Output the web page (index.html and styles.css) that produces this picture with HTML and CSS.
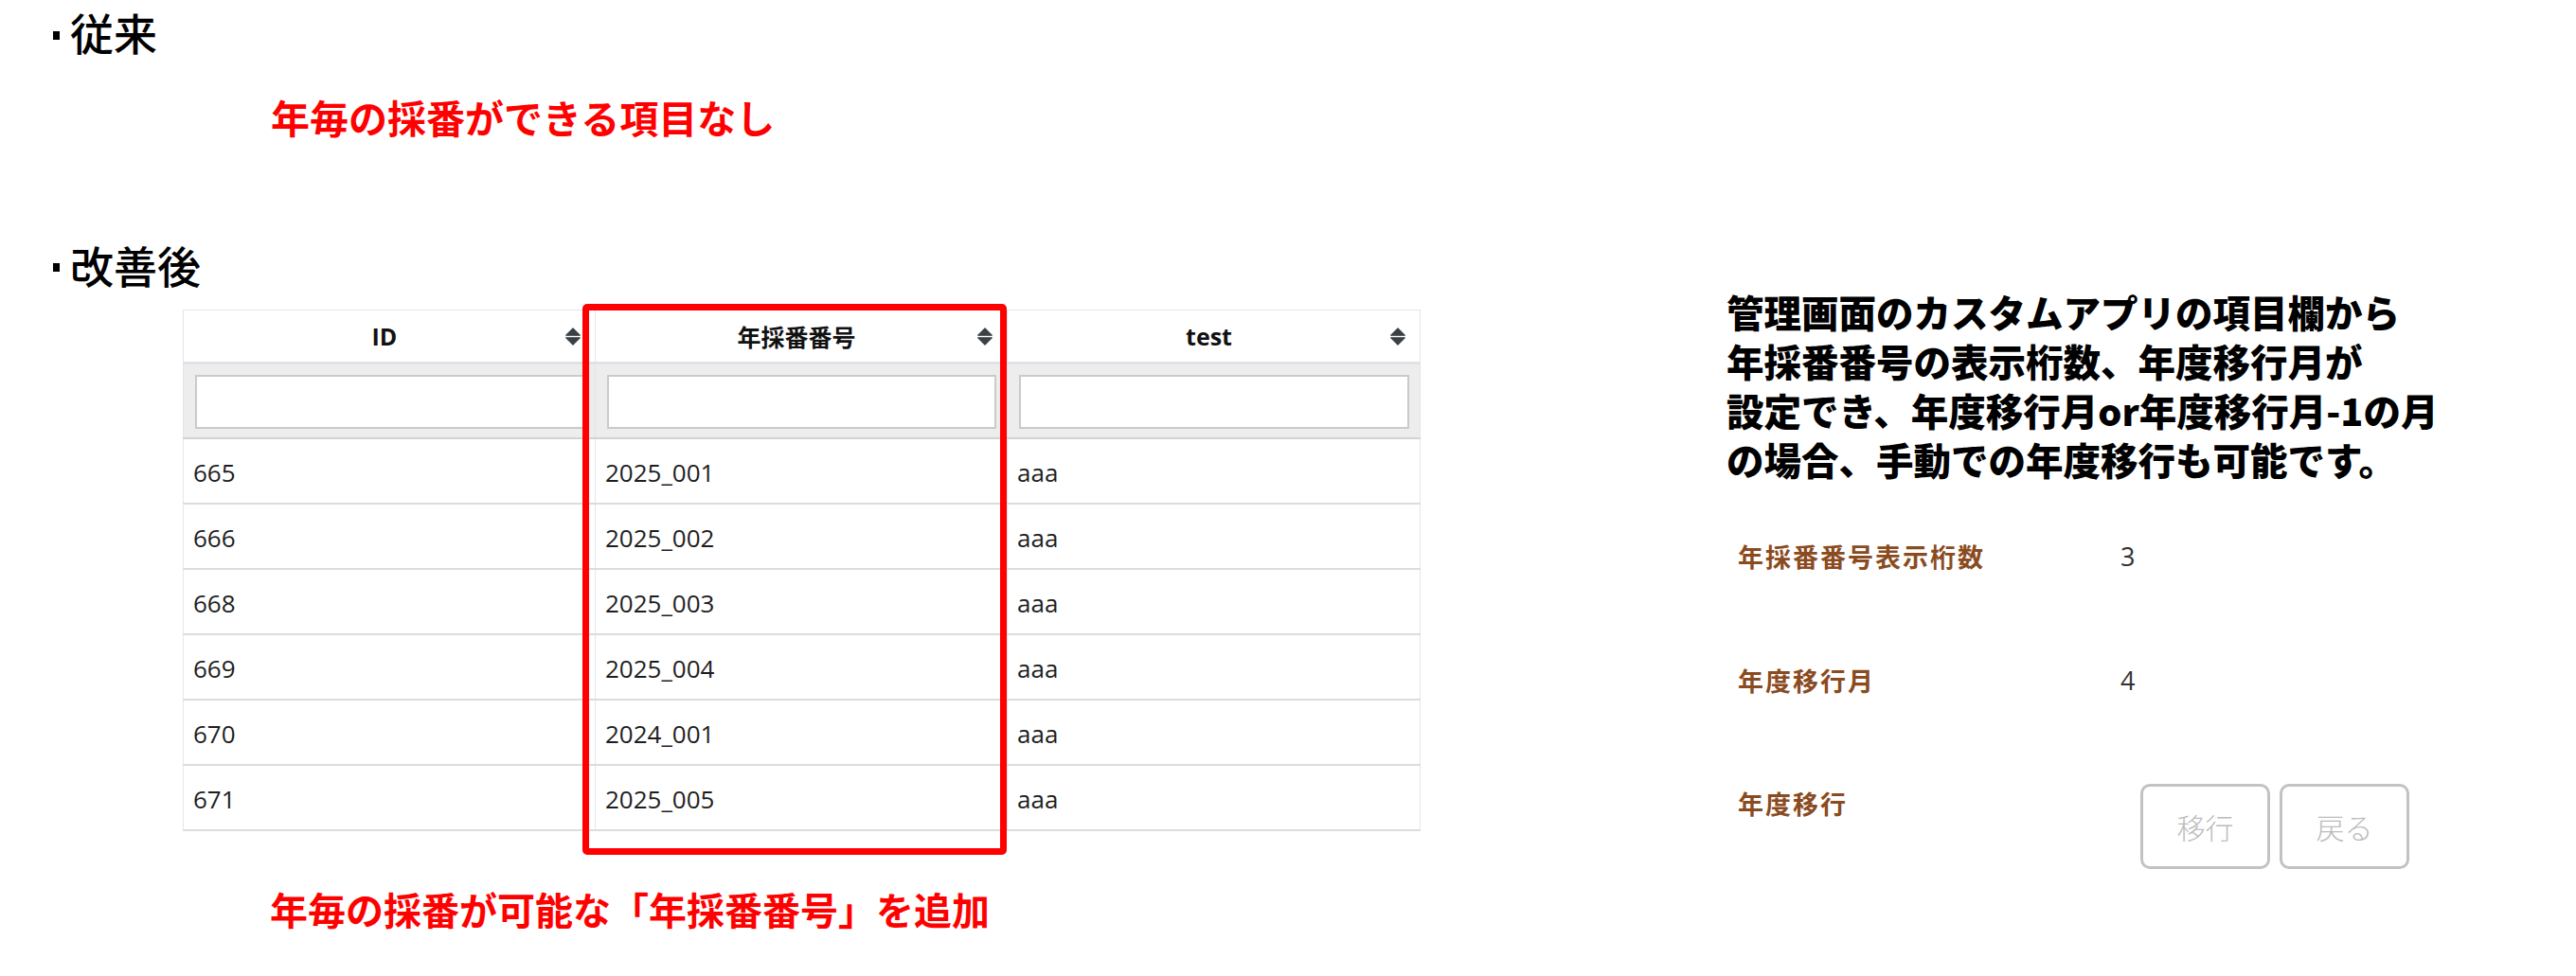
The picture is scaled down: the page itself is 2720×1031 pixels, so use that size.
FILE: index.html
```html
<!DOCTYPE html>
<html lang="ja">
<head>
<meta charset="utf-8">
<title>年採番番号</title>
<link rel="stylesheet" href="styles.css">
</head>
<body>
<main class="page">
  <div class="left">
    <section class="block block-before">
      <h2 class="sec-title"><span class="bullet"></span><span>従来</span></h2>
      <p class="note note-before">年毎の採番ができる項目なし</p>
    </section>
    <section class="block">
      <h2 class="sec-title sec-after"><span class="bullet"></span><span>改善後</span></h2>
      <div class="table-wrap">
        <table class="grid">
          <colgroup><col class="c1"><col class="c2"><col class="c3"></colgroup>
          <thead>
            <tr class="head-row">
              <th><div class="th-in"><span class="th-label">ID</span><svg class="sort" viewBox="0 0 16 19" width="16" height="19"><path d="M8 0.8 L15.3 8.2 H0.7 Z"/><path d="M0.7 10.8 H15.3 L8 18.2 Z"/></svg></div></th>
              <th><div class="th-in"><span class="th-label">年採番番号</span><svg class="sort" viewBox="0 0 16 19" width="16" height="19"><path d="M8 0.8 L15.3 8.2 H0.7 Z"/><path d="M0.7 10.8 H15.3 L8 18.2 Z"/></svg></div></th>
              <th><div class="th-in"><span class="th-label">test</span><svg class="sort" viewBox="0 0 16 19" width="16" height="19"><path d="M8 0.8 L15.3 8.2 H0.7 Z"/><path d="M0.7 10.8 H15.3 L8 18.2 Z"/></svg></div></th>
            </tr>
            <tr class="filter-row">
              <td><input class="filter" type="text"></td>
              <td><input class="filter" type="text"></td>
              <td><input class="filter" type="text"></td>
            </tr>
          </thead>
          <tbody>
            <tr><td>665</td><td>2025_001</td><td>aaa</td></tr>
            <tr><td>666</td><td>2025_002</td><td>aaa</td></tr>
            <tr><td>668</td><td>2025_003</td><td>aaa</td></tr>
            <tr><td>669</td><td>2025_004</td><td>aaa</td></tr>
            <tr><td>670</td><td>2024_001</td><td>aaa</td></tr>
            <tr><td>671</td><td>2025_005</td><td>aaa</td></tr>
          </tbody>
        </table>
        <div class="highlight"></div>
      </div>
      <p class="note note-after">年毎の採番が可能な「年採番番号」を追加</p>
    </section>
  </div>
  <aside class="right">
    <p class="desc">管理画面のカスタムアプリの項目欄から<br>年採番番号の表示桁数、年度移行月が<br>設定でき、年度移行月or年度移行月-1の月<br>の場合、手動での年度移行も可能です。</p>
    <dl class="settings">
      <div class="set-row r1"><dt>年採番番号表示桁数</dt><dd>3</dd></div>
      <div class="set-row r2"><dt>年度移行月</dt><dd>4</dd></div>
      <div class="set-row r3"><dt>年度移行</dt><dd class="btns"><button class="btn" type="button">移行</button><button class="btn" type="button">戻る</button></dd></div>
    </dl>
  </aside>
</main>
</body>
</html>
```

FILE: styles.css
```css
* { box-sizing: border-box; }

html, body {
  margin: 0;
  padding: 0;
  background: #fff;
}

body {
  width: 2720px;
  height: 1031px;
  overflow: hidden;
  font-family: "Noto Sans CJK JP", sans-serif;
  color: #000;
}

.page {
  display: flex;
  align-items: flex-start;
}

.left {
  width: 1823px;
  flex: none;
}

.right {
  flex: 1;
  padding-top: 303px;
}

/* ---------- section titles ---------- */
.block-before {
  padding-top: 10px;
}

.sec-title {
  margin: 0;
  display: flex;
  align-items: flex-start;
  padding-left: 56px;
  font-size: 46px;
  line-height: 46px;
  font-weight: 500;
}

.bullet {
  width: 7px;
  height: 9px;
  background: #000;
  margin-top: 23px;
  margin-right: 11px;
  flex: none;
}

.sec-after {
  margin-top: 112px;
}

.sec-after .bullet {
  margin-top: 22px;
}

/* ---------- red notes ---------- */
.note {
  margin: 0;
  color: #ff0000;
  font-weight: 700;
  font-size: 41px;
  line-height: 41px;
  padding-left: 286px;
  white-space: nowrap;
}

.note-before {
  margin-top: 47px;
}

.note-after {
  margin-top: 62px;
  font-size: 40px;
  line-height: 40px;
  padding-left: 285px;
}

/* ---------- table ---------- */
.table-wrap {
  position: relative;
  margin: 25px 0 0 193px;
  width: 1306px;
}

.grid {
  width: 1306px;
  border-collapse: collapse;
  table-layout: fixed;
  font-family: "Open Sans", "Noto Sans CJK JP", sans-serif;
  border: 1px solid #e2e5e9;
}

.c1 { width: 435px; }
.c2 { width: 435px; }
.c3 { width: 436px; }

.head-row th {
  height: 56px;
  padding: 0;
  border-left: 1px solid #e2e5e9;
  border-right: 1px solid #e2e5e9;
  border-bottom: 3px solid #dee2e6;
  font-size: 25px;
  font-weight: 700;
  color: #111;
  vertical-align: middle;
}

.th-in {
  display: flex;
  align-items: center;
  padding: 0 15px 0 21px;
}

.th-label {
  flex: 1;
  text-align: center;
}

.sort {
  flex: none;
  display: block;
  fill: #3b4045;
  stroke: #3b4045;
  stroke-width: 1.2;
  stroke-linejoin: round;
}

.filter-row td {
  background: #ededed;
  padding: 11px 11px 9px 12px;
  border-left: 1px solid #e2e5e9;
  border-right: 1px solid #e2e5e9;
  border-bottom: 2px solid #d3d3d3;
}

.filter {
  display: block;
  width: 100%;
  height: 57px;
  margin: 0;
  padding: 0;
  border: 2px solid #cacaca;
  border-radius: 0;
  background: #fff;
}

tbody td {
  height: 69px;
  padding: 3px 10px 0;
  border-left: 1px solid #e5e7ea;
  border-right: 1px solid #e5e7ea;
  border-bottom: 2px solid #dcdcdc;
  font-size: 26px;
  color: #1e1e1e;
  vertical-align: middle;
  white-space: nowrap;
}

.highlight {
  position: absolute;
  left: 422px;
  top: -6px;
  width: 448px;
  height: 582px;
  border: 7px solid #ff0000;
  border-radius: 5px;
  pointer-events: none;
}

/* ---------- right side ---------- */
.desc {
  margin: 0;
  font-size: 39.5px;
  line-height: 52px;
  font-weight: 900;
  color: #000;
  white-space: nowrap;
}

.settings {
  margin: 63px 0 0;
  padding-left: 12px;
}

.set-row {
  display: flex;
  align-items: flex-start;
}

.r1 { height: 131px; }
.r2 { height: 123px; }

.set-row dt {
  width: 404px;
  flex: none;
  font-size: 27px;
  line-height: 27px;
  font-weight: 700;
  color: #8a4b1f;
  letter-spacing: 2px;
  white-space: nowrap;
}

.set-row dd {
  margin: 0;
  font-family: "Open Sans", sans-serif;
  font-size: 27px;
  line-height: 27px;
  color: #333;
}

.r3 dt {
  margin-top: 7px;
}

.set-row .btns {
  display: flex;
  gap: 10px;
  margin: 0 0 0 21px;
}

.btn {
  width: 137px;
  height: 90px;
  padding: 0;
  border: 3px solid #c2c2c2;
  border-radius: 10px;
  background: #fff;
  font-family: "Noto Sans CJK JP", sans-serif;
  font-size: 30px;
  font-weight: 300;
  color: #bcbcbc;
}
```
